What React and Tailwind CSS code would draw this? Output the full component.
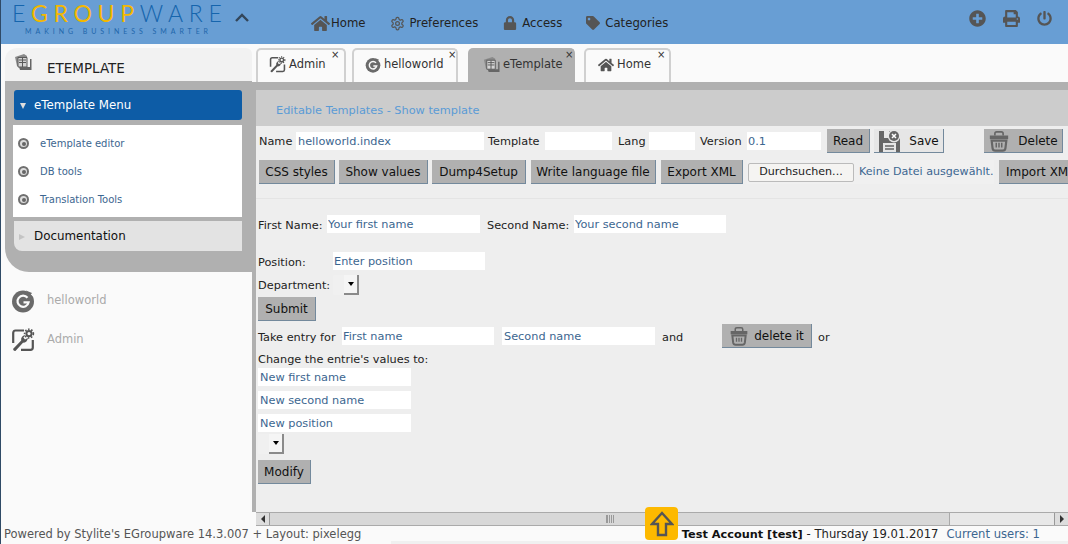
import { FaHome, FaLock, FaTag, FaPrint, FaPlusCircle, FaPowerOff } from 'react-icons/fa';
import { LuSettings } from 'react-icons/lu';

const TemplateIcon = ({ size = 18 }) => (
  <svg width={size} height={size} viewBox="0 0 18 18" className="shrink-0">
    <path d="M1 4 L10 1 L13 3 V13 H3 Z" fill="#8a8a8a" />
    <path d="M4 4.5 H13 V14 H4 Z" fill="#d4d4d4" stroke="#5a5a5a" strokeWidth="1" />
    <path d="M5 7 H12 M5 9.5 H12 M8.5 5 V14" stroke="#5a5a5a" strokeWidth="1" />
    <path d="M5 14 H16 V6 H17.5 V17 H6 Z" fill="#666" />
  </svg>
);

const GIcon = ({ size = 16 }) => (
  <svg width={size} height={size} viewBox="0 0 24 24" className="shrink-0">
    <circle cx="12" cy="12.5" r="11" fill="#6a6a6a" />
    <path d="M14 1 L23 1 L23 8 Z" fill="#fafafa" />
    <path d="M15 1.5 L21 4 L18 8 Z" fill="#6a6a6a" />
    <path d="M16.5 8.8 A5.6 5.6 0 1 0 17.6 13.4 L12.5 13.4" fill="none" stroke="#fafafa" strokeWidth="2.2" />
  </svg>
);

const AdminIcon = ({ size = 18 }) => (
  <svg width={size} height={size} viewBox="0 0 24 24" className="shrink-0">
    <path d="M13 2.5 H4.5 Q2.2 2.5 2.2 5 V15" fill="none" stroke="#555" strokeWidth="2.2" />
    <path d="M10 21.8 H19.5 Q21.8 21.8 21.8 19.5 V12" fill="none" stroke="#555" strokeWidth="2.2" />
    <path d="M2 21 L10.2 12.6 A4.6 4.6 0 0 1 14.6 7 L12.4 9.6 L14 11.6 L16.8 10 A4.8 4.8 0 0 1 12 14.8 L4.4 23 Q2.6 23.4 2 21 Z" fill="#555" />
    <circle cx="18" cy="5.6" r="2.6" fill="none" stroke="#555" strokeWidth="2" />
    <circle cx="18" cy="5.6" r="4.4" fill="none" stroke="#555" strokeWidth="1.6" strokeDasharray="1.6 1.6" />
  </svg>
);

const TrashIcon = ({ size = 20 }) => (
  <svg width={size} height={size} viewBox="0 0 24 24" className="shrink-0">
    <path d="M7.5 6 V4 Q7.5 2 9.5 2 H14.5 Q16.5 2 16.5 4 V6" fill="none" stroke="#666" strokeWidth="1.8" />
    <path d="M2 6 H22 V10 H2 Z" fill="#666" />
    <path d="M4 11.5 H20 L19 20 Q18.6 22.5 16 22.5 H8 Q5.4 22.5 5 20 Z" fill="none" stroke="#666" strokeWidth="2.4" />
    <path d="M9 14 V19 M12 14 V19 M15 14 V19" stroke="#666" strokeWidth="1.6" />
  </svg>
);

const SaveIcon = () => (
  <svg width={24} height={24} viewBox="0 0 24 24" className="shrink-0">
    <path d="M1 2 H17 L22 7 V23 H1 Z" fill="#666" />
    <path d="M5 14 H18 V23 H5 Z" fill="#e6e6e6" />
    <path d="M7 17 H16 M7 20 H16" stroke="#666" strokeWidth="1.4" />
    <path d="M6 2 H11 V9 H6 Z" fill="#e6e6e6" />
    <circle cx="16" cy="7" r="6.4" fill="#e6e6e6" />
    <circle cx="16" cy="7" r="5" fill="#666" />
    <path d="M14 5 L18 9 M18 5 L14 9" stroke="#fff" strokeWidth="1.5" />
  </svg>
);

const Bullet = () => (
  <span className="w-[11px] h-[11px] rounded-full border-[2px] border-[#707070] bg-[#ddd] flex items-center justify-center shrink-0">
    <span className="w-[4px] h-[4px] rounded-full bg-[#666]" />
  </span>
);

const Btn = ({ children, className = '' }) => (
  <button className={`h-[24px] flex items-center justify-center shrink-0 bg-[#b0b0b0] border-r border-b border-[#73899c] text-[12px] text-[#111] whitespace-nowrap ${className}`}>
    {children}
  </button>
);

const Field = ({ value, className = '' }) => (
  <input
    readOnly
    value={value || ''}
    className={`h-[18px] bg-white px-[1px] text-[11.3px] text-[#3c6690] outline-none shrink-0 ${className}`}
  />
);

const Select = () => (
  <div className="w-[26px] h-[20px] rounded-[2px] bg-[#f0f0f0] flex justify-end shrink-0">
    <span className="w-[15px] h-[20px] bg-[#f5f5f5] border-r-2 border-b-2 border-[#8a8a8a] flex items-center justify-center">
      <span className="border-x-[3px] border-x-transparent border-t-[4px] border-t-black" />
    </span>
  </div>
);

const Tab = ({ icon, label, active, className }) => (
  <div className={`relative h-[34px] flex items-center rounded-t-[5px] border-x-2 border-t-2 shrink-0 text-[11.5px] text-[#333] pb-[3px] ${className} ${active ? 'bg-[#b0b0b0] border-[#b0b0b0]' : 'bg-[#fafafa] border-[#d0d0d0]'}`}>
    {icon}
    <span className="ml-[3px]">{label}</span>
  </div>
);

const TabClose = ({ className }) => (
  <span className={`absolute text-[10px] leading-[14px] text-[#333] ${className}`}>×</span>
);

const NavItem = ({ icon, label, className = 'gap-[5px]' }) => (
  <div className={`flex items-center text-[#222] text-[11.7px] ${className}`}>
    {icon}
    <span>{label}</span>
  </div>
);

export default function App() {
  return (
    <div className="relative w-[1068px] h-[544px] overflow-hidden bg-[#fafafa] border-l border-[#2f4a66] text-[11.3px] text-[#222] font-['DejaVu_Sans',sans-serif]">
      {/* header */}
      <header className="h-[44px] bg-[#689ed4] flex items-start">
        <div className="w-[234px] shrink-0 pl-[11px] pt-[1px] font-['Lato',sans-serif]">
          <div className="h-[24px] leading-[24px] text-[23px] font-light tracking-[5.7px] whitespace-nowrap text-[#1565ad]">
            E<span className="text-[#f4b800] font-normal">GROUP</span>WARE
          </div>
          <div className="mt-[2px] pl-[13px] text-[7px] leading-[9px] tracking-[3.95px] whitespace-nowrap text-[#1f66ab]">MAKING BUSINESS SMARTER</div>
        </div>
        <svg width="14" height="9" viewBox="0 0 14 9" className="mt-[13px] shrink-0">
          <path d="M1 8 L7 2 L13 8" fill="none" stroke="#33465a" strokeWidth="2.4" />
        </svg>
        <nav className="ml-[62px] pt-[14px] flex items-center gap-[24px]">
          <NavItem className="gap-[1px]" icon={<FaHome size={19} color="#555" />} label="Home" />
          <NavItem icon={<LuSettings size={15} color="#555" />} label="Preferences" />
          <NavItem className="gap-[5px] ml-[1px]" icon={<FaLock size={14} color="#555" />} label="Access" />
          <NavItem icon={<FaTag size={14} color="#555" />} label="Categories" />
        </nav>
        <div className="ml-auto pr-[16px] pt-[10px] flex items-center gap-[17px]">
          <FaPlusCircle size={17} color="#555" />
          <FaPrint size={17} color="#555" />
          <FaPowerOff size={15} color="#555" />
        </div>
      </header>

      <div className="flex h-[482px]">
        {/* sidebar */}
        <aside className="w-[251px] shrink-0 pt-[4px] pl-[4px]">
          <div className="h-[33px] bg-[#f2f2f2] rounded-tl-[12px] rounded-tr-[6px] flex items-start pl-[9px] pt-[5px]">
            <TemplateIcon />
            <span className="ml-[15px] mt-[5px] text-[13.5px] text-[#222]">ETEMPLATE</span>
          </div>
          <div className="h-[191px] bg-[#b0b0b0] rounded-bl-[24px] pl-[8px] pr-[10px] pt-[9px]">
            <div className="h-[30px] ml-[1px] bg-[#0d5ca6] rounded-[3px] flex items-center pl-[6px] pt-[2px] text-[11.8px] text-white">
              <span className="border-x-[3.5px] border-x-transparent border-t-[6px] border-t-[#ddd] mr-[8px]" />
              eTemplate Menu
            </div>
            <div className="h-[92px] mt-[5px] bg-white flex flex-col pl-[5px] pt-[13px] gap-[17px] text-[10px] leading-[11px] text-[#3c6690]">
              <div className="flex items-center gap-[11px]"><Bullet />eTemplate editor</div>
              <div className="flex items-center gap-[11px]"><Bullet />DB tools</div>
              <div className="flex items-center gap-[11px]"><Bullet />Translation Tools</div>
            </div>
            <div className="h-[30px] ml-[1px] mt-[4px] bg-[#e3e3e3] rounded-bl-[8px] flex items-center pl-[5px] pt-[2px] text-[11.9px] text-[#111]">
              <span className="border-y-[3.5px] border-y-transparent border-l-[6px] border-l-[#c4c4c4] mr-[9px]" />
              Documentation
            </div>
          </div>
          <div className="pl-[6px] pt-[17px] flex flex-col gap-[16px] text-[11.5px] text-[#aaa]">
            <div className="flex items-center gap-[12px] h-[23px]"><GIcon size={24} />helloworld</div>
            <div className="flex items-center gap-[12px] h-[23px]"><AdminIcon size={24} />Admin</div>
          </div>
        </aside>

        {/* main */}
        <main className="flex-1 min-w-0 flex flex-col pt-[4px] overflow-hidden">
          <div className="h-[34px] shrink-0 pl-[4px] flex items-end">
            <Tab className="w-[90px] pl-[11px]" icon={<AdminIcon size={17} />} label="Admin" />
            <Tab className="ml-[6px] w-[106px] pl-[11px]" icon={<GIcon size={16} />} label="helloworld" />
            <Tab active className="ml-[10px] w-[107px] pl-[13px]" icon={<TemplateIcon size={17} />} label="eTemplate" />
            <Tab className="ml-[9px] w-[87px] pl-[12px]" icon={<FaHome size={16} color="#555" />} label="Home" />
          </div>
          <TabClose className="left-[330px] top-[48px]" />
          <TabClose className="left-[447px] top-[48px]" />
          <TabClose className="left-[564px] top-[48px]" />
          <TabClose className="left-[656px] top-[48px]" />
          <div className="flex-1 min-h-0 flex border-t-[8px] border-[#b0b0b0]">
            <div className="w-[4px] shrink-0 bg-[#b0b0b0]" />
            <div className="flex-1 min-w-0 flex flex-col bg-[#eee] overflow-hidden">
              <div className="h-[36px] shrink-0 bg-[#ccc] pl-[20px] pt-[14px] text-[#5a9bd6] leading-[14px]">
                Editable Templates - Show template
              </div>

              <div className="h-[30px] shrink-0 flex items-center pl-[3px]">
                <span className="w-[37px] pt-[2px]">Name</span>
                <Field value="helloworld.index" className="w-[188px] !px-[2px]" />
                <span className="ml-[4px] w-[57px] pt-[2px]">Template</span>
                <Field className="w-[67px]" />
                <span className="ml-[6px] w-[31px] pt-[2px]">Lang</span>
                <Field className="w-[46px]" />
                <span className="ml-[5px] w-[47px] pt-[2px]">Version</span>
                <Field value="0.1" className="w-[74px]" />
                <Btn className="ml-[6px] w-[43px]">Read</Btn>
                <Btn className="ml-[4px] w-[70px] !bg-[#e6e6e6] gap-[7px]"><SaveIcon />Save</Btn>
                <Btn className="ml-[40px] w-[79px] gap-[8px]"><TrashIcon size={22} />Delete</Btn>
              </div>

              <div className="mt-[4px] h-[24px] shrink-0 flex items-center pl-[3px] whitespace-nowrap">
                <Btn className="w-[76px]">CSS styles</Btn>
                <Btn className="ml-[4px] w-[89px]">Show values</Btn>
                <Btn className="ml-[4px] w-[94px]">Dump4Setup</Btn>
                <Btn className="ml-[5px] w-[125px]">Write language file</Btn>
                <Btn className="ml-[5px] w-[82px]">Export XML</Btn>
                <div className="ml-[4px] w-[247px] h-[24px] shrink-0 bg-[#f0f0f0] flex items-center pl-[1px] text-[11.1px]">
                  <span className="w-[106px] h-[19px] rounded-[2px] border border-[#bbb] bg-[#f5f4f2] flex items-center justify-center">Durchsuchen...</span>
                  <span className="ml-[5px] text-[#3c6690]">Keine Datei ausgewählt.</span>
                </div>
                <Btn className="ml-[5px] w-[90px] !justify-start pl-[7px]">Import XML</Btn>
              </div>

              <div className="mt-[14px] shrink-0 border-t border-[#e4e4e4] pl-[2px]">
                <div className="mt-[16px] h-[18px] flex items-center">
                  <span className="w-[69px] pt-[4px]">First Name:</span>
                  <Field value="Your first name" className="w-[153px]" />
                  <span className="ml-[7px] w-[87px] pt-[4px]">Second Name:</span>
                  <Field value="Your second name" className="w-[152px]" />
                </div>
                <div className="mt-[19px] h-[18px] flex items-center">
                  <span className="w-[75px] pt-[4px]">Position:</span>
                  <Field value="Enter position" className="w-[152px]" />
                </div>
                <div className="mt-[5px] h-[20px] flex items-center">
                  <span className="w-[75px] pt-[2px]">Department:</span>
                  <Select />
                </div>
                <Btn className="mt-[2px] w-[58px]">Submit</Btn>
                <div className="mt-[6px] h-[18px] flex items-center">
                  <span className="w-[84px] pt-[4px]">Take entry for</span>
                  <Field value="First name" className="w-[152px]" />
                  <Field value="Second name" className="ml-[8px] w-[153px] !px-[2px]" />
                  <span className="ml-[7px] w-[60px] pt-[4px]">and</span>
                  <Btn className="w-[90px] gap-[5px]"><TrashIcon />delete it</Btn>
                  <span className="ml-[6px] pt-[4px]">or</span>
                </div>
                <div className="mt-[8px] leading-[14px]">Change the entrie's values to:</div>
                <div className="mt-[1px] flex flex-col gap-[5px]">
                  <Field value="New first name" className="w-[153px] !px-[2px]" />
                  <Field value="New second name" className="w-[153px] !px-[2px]" />
                  <Field value="New position" className="w-[153px] !px-[2px]" />
                </div>
                <div className="mt-[2px]"><Select /></div>
                <Btn className="mt-[6px] w-[53px]">Modify</Btn>
              </div>
            </div>
          </div>
          {/* scrollbar */}
          <div className="h-[14px] shrink-0 ml-[4px] bg-[#e8e8e8] border-y border-[#aaa] flex items-center">
            <div className="w-[14px] h-full bg-[#ddd] flex items-center justify-center border-r border-[#999]">
              <span className="border-y-[4px] border-y-transparent border-r-[4px] border-r-[#333]" />
            </div>
            <div className="w-[680px] h-full bg-[#d8d8d8] border-r border-[#aaa] flex items-center justify-center">
              <span className="w-[8px] h-[8px] border-x border-[#999] bg-[repeating-linear-gradient(90deg,#999_0,#999_1px,transparent_1px,transparent_2px)]" />
            </div>
            <div className="flex-1" />
            <div className="w-[14px] h-full bg-[#ddd] flex items-center justify-center border-l border-[#999]">
              <span className="border-y-[4px] border-y-transparent border-l-[4px] border-l-[#333]" />
            </div>
          </div>
        </main>
      </div>

      {/* footer */}
      <footer className="h-[18px] flex items-center pl-[3px] pr-[28px] bg-[#fafafa] text-[11.6px] whitespace-nowrap">
        <span className="text-[11.5px] text-[#555]">Powered by Stylite's EGroupware 14.3.007 + Layout: pixelegg</span>
        <span className="ml-auto font-bold text-[11.3px] text-[#111]">Test Account [test]</span>
        <span className="ml-[4px] text-[#222]">- Thursday 19.01.2017</span>
        <span className="ml-[8px] text-[#3c6690]">Current users: 1</span>
      </footer>

      {/* strip along the bottom edge of the page */}
      <div className="absolute left-[390px] right-0 bottom-0 h-[3px] bg-[#f0f0f0]" />

      {/* scroll-to-top button over the scrollbar and footer */}
      <div className="absolute left-[644px] top-[507px] w-[33px] h-[33px] rounded-[4px] bg-[#fdb900] flex items-center justify-center">
        <svg width="24" height="26" viewBox="0 0 24 26">
          <path d="M12 2 L22 13 H16 V24 H8 V13 H2 Z" fill="none" stroke="#555" strokeWidth="2.4" />
        </svg>
      </div>
    </div>
  );
}
